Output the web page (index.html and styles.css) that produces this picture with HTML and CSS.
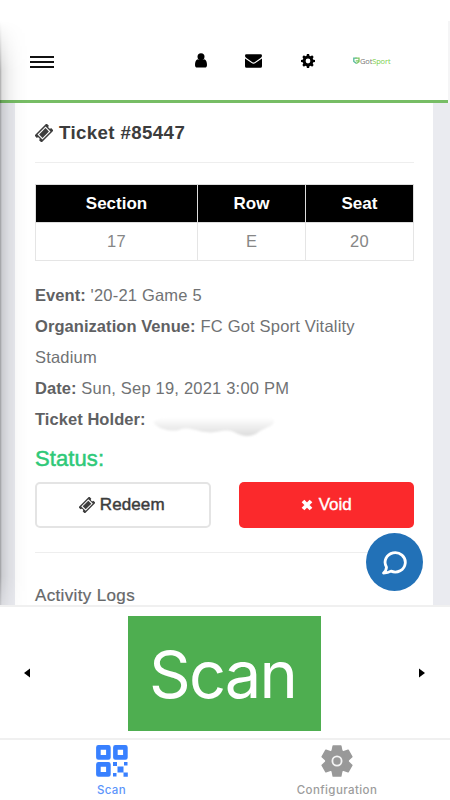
FILE: index.html
```html
<!DOCTYPE html>
<html lang="en">
<head>
<meta charset="utf-8">
<title>Ticket #85447</title>
<link rel="stylesheet" href="styles.css">
</head>
<body>
<svg class="defs" width="0" height="0">
  <symbol id="ticket" viewBox="0 0 18 18">
    <g transform="rotate(-45 9 9)">
      <path fill="currentColor" fill-rule="evenodd" d="M.5 4h17v3.400a1.600 1.600 0 0 0 0 3.200V14H.5v-3.400a1.600 1.600 0 0 0 0-3.200zM3.300 5.500v7h11.400v-7z"/>
      <path fill="currentColor" d="M4.500 6.600h9v4.800h-9z"/>
    </g>
  </symbol>
</svg>
<div class="app">
  <main class="webview">
    <header class="topbar">
      <div class="menu"><span></span><span></span><span></span></div>
      <nav class="icons">
        <svg class="user" width="12" height="15" viewBox="0 0 12 15"><circle cx="6" cy="3.700" r="3.500"/><path d="M2.700 6.200Q6 8 9.300 6.200C11.200 6.800 12 8.800 12 12c0 1.700-.8 2.600-2.200 2.600H2.200C.8 14.600 0 13.700 0 12c0-3.200.8-5.200 2.700-5.800z"/></svg>
        <svg class="mail" width="17" height="14" viewBox="0 0 17 14"><path d="M1.400.3h14.200Q17 .3 17 1.700 17 3 15.600 4L9.600 8.200Q8.500 9 7.400 8.200L1.400 4Q0 3 0 1.700 0 .3 1.400.3z"/><path d="M0 4.500l6.600 4.600q1.900 1.400 3.800 0L17 4.500v7.700q0 1.500-1.500 1.500h-14Q0 13.700 0 12.200z"/></svg>
        <svg class="cog" width="14" height="14" viewBox="0 0 14 14"><circle cx="7" cy="7" r="3.900" fill="none" stroke="#000" stroke-width="3"/><path d="M5.900 0h2.200l.5 3H5.400zM5.900 14h2.200l.5-3H5.400zM0 5.900v2.200l3 .5V5.400zM14 5.900v2.200l-3 .5V5.400zM1.300 2.900l1.600-1.600 2.300 1.700L3 5.200zM11.100 1.300l1.600 1.600L11 5.200 8.800 3zM1.300 11.100l1.600 1.600L5.200 11 3 8.800zM11.100 12.700l1.600-1.600L11 8.800 8.800 11z"/></svg>
      </nav>
      <div class="logo"><svg width="7" height="8" viewBox="0 0 7 8" fill="none" stroke-width="1.300"><path stroke="#54b99a" d="M3.500 6.500L.8 4.500V1.200h2.800"/><path stroke="#80c863" d="M2.500 1.200H6v3.500L3.400 6.500M2.700 3.800H6"/></svg><span>Got<b>Sport</b></span></div>
    </header>
    <section class="card">
      <h1><svg class="ticket" width="18" height="18"><use href="#ticket"/></svg>Ticket #85447</h1>
      <table>
        <thead><tr><th class="section">Section</th><th class="row">Row</th><th>Seat</th></tr></thead>
        <tbody><tr><td>17</td><td>E</td><td>20</td></tr></tbody>
      </table>
      <div class="details">
        <p><b>Event:</b> '20-21 Game 5</p>
        <p><b>Organization Venue:</b> FC Got Sport Vitality<br>Stadium</p>
        <p><b>Date:</b> Sun, Sep 19, 2021 3:00 PM</p>
        <p class="holder"><b>Ticket Holder:</b><svg width="127" height="32" viewBox="0 0 127 32"><defs><linearGradient id="smudge" x1="0" y1="0" x2="0" y2="1"><stop offset=".3" stop-color="#fff"/><stop offset="1" stop-color="#dcdcdc"/></linearGradient><filter id="soft"><feGaussianBlur stdDeviation="1.300"/></filter></defs><path filter="url(#soft)" fill="url(#smudge)" d="M2 14C7 21 18 24 28 22 37 18 44 23 55 24 66 26 72 20 83 24 93 30 102 29 109 23 115 19 124 18 123 12L112 2 80 6 25 2z"/></svg></p>
      </div>
      <h2>Status:</h2>
      <div class="actions">
        <button class="redeem"><svg class="ticket" width="16" height="16"><use href="#ticket"/></svg>Redeem</button>
        <button class="void"><svg width="12" height="12" viewBox="0 0 12 12"><path d="M2 2l8 8M10 2l-8 8" stroke="#fff" stroke-width="3.800"/></svg>Void</button>
      </div>
      <h3>Activity Logs</h3>
    </section>
    <div class="chat"><svg width="26" height="26" viewBox="0 0 26 26" fill="none" stroke="#fff" stroke-width="2.800" stroke-linejoin="round"><path d="M5.500 18.200A10.100 9.700 0 1 1 10 22.100Q7 24 2.500 24 5.300 21.800 5.500 18.200z"/></svg></div>
  </main>
  <section class="scanner">
    <svg width="6" height="10" viewBox="0 0 6 10"><path d="M6 .5v9L0 5z"/></svg>
    <button class="scan">Scan</button>
    <svg width="6" height="10" viewBox="0 0 6 10"><path d="M0 .5v9L6 5z"/></svg>
  </section>
  <nav class="tabs">
    <div class="tab active">
      <svg width="32" height="32" viewBox="0 0 32 32"><g fill="none" stroke="#3880ff" stroke-width="4.600" stroke-linejoin="round"><path d="M2.400 2.400h10v10h-10zM19.400 2.400h10v10h-10zM2.400 19.400h10v10h-10z"/></g><path fill="#3880ff" d="M17 17h4v4h-4zM28 17h3.500v3.500H28zM21.500 21.500h6v6h-6zM17 28h3.500v3.500H17zM27.500 27.500h4.300v4.300h-4.300z"/></svg>
      <span>Scan</span>
    </div>
    <div class="tab config">
      <svg width="32" height="32" viewBox="0 0 32 32"><g fill="#999" stroke="#999" stroke-width="1.500" stroke-linejoin="round"><circle cx="16" cy="16" r="11"/><path id="tooth" d="M11 7l1.200-6h7.600L21 7z"/><use href="#tooth" transform="rotate(60 16 16)"/><use href="#tooth" transform="rotate(120 16 16)"/><use href="#tooth" transform="rotate(180 16 16)"/><use href="#tooth" transform="rotate(240 16 16)"/><use href="#tooth" transform="rotate(300 16 16)"/></g><circle cx="16" cy="16" r="4.600" fill="#999" stroke="#f4f4f4" stroke-width="1.800"/></svg>
      <span>Configuration</span>
    </div>
  </nav>
</div>
</body>
</html>
```
FILE: styles.css
```css
* { box-sizing: border-box; }
body { margin: 0; background: #fff; font-family: "Liberation Sans", Arial, sans-serif; }
h1, h2, h3, p { margin: 0; }
button { font: inherit; margin: 0; padding: 0; }
svg { display: block; flex: none; }
.defs { position: absolute; }
.app { width: 450px; height: 800px; overflow: hidden; display: flex; flex-direction: column; padding-top: 21px; }

.webview { position: relative; height: 584px; overflow: hidden; background: #eaebf0; flex: none; }
.webview::before { content: ""; position: absolute; z-index: 2; left: 0; top: 0; width: 28px; height: 100%;
  background: linear-gradient(90deg, rgba(0,0,0,.34) 0, rgba(0,0,0,.13) 2px, rgba(0,0,0,.06) 9px, rgba(0,0,0,.02) 17px, transparent 28px);
  -webkit-mask-image: linear-gradient(transparent, #000 50px, #000 555px, rgba(0,0,0,.5)); mask-image: linear-gradient(transparent, #000 50px, #000 555px, rgba(0,0,0,.5)); }
.topbar { height: 82px; margin-right: 2px; padding: 0 0 0 30px; display: flex; align-items: center; background: #fff; border-bottom: 3px solid #77bd65; }
.webview::after { content: ""; position: absolute; right: 0; top: 0; width: 2px; height: 82px; background: #f5f5f6; }
.menu { width: 24px; display: grid; gap: 3px; margin-top: 2px; flex: none; }
.menu span { height: 2px; background: #111; }
.icons { display: flex; align-items: center; margin-left: 141px; flex: none; }
.mail { margin: 1px 0 0 38px; }
.cog { margin-left: 39px; }
.logo { display: flex; align-items: center; margin: 1px 0 0 38px; font: 7.500px/8px "Open Sans", sans-serif; letter-spacing: -.15px; color: #777; flex: none; }
.logo b { color: #7cd04b; font-weight: 400; }

.card { width: 418px; height: 502px; margin-left: 15px; padding: 0 19px 0 20px; background: #fff; color: #707274; }
h1 { height: 60px; display: flex; align-items: center; gap: 6px; border-bottom: 1px solid #eee; color: #3c3c3c; font-size: 18.700px; font-weight: 700; letter-spacing: .38px; padding-top: 1px; }
table { width: 379px; margin: 21px 0 0; border-collapse: collapse; table-layout: fixed; text-align: center; font-size: 16.500px; letter-spacing: .2px; }
th { height: 38px; padding: 0; background: #000; color: #fff; border: 1px solid #ddd; font-size: 17px; letter-spacing: 0; }
td { height: 38px; padding: 0; border: 1px solid #e5e5e5; color: #868686; }
.section { width: 162px; }
.row { width: 108px; }
.details { margin-top: 19px; font-size: 16.500px; line-height: 31px; letter-spacing: .2px; }
.details b { color: #5f6163; letter-spacing: .06px; }
.holder { height: 31px; display: flex; align-items: center; }
.holder svg { margin: 8px 0 0 5px; }
h2 { height: 46px; line-height: 48px; color: #2fc978; font-size: 22px; font-weight: 400; letter-spacing: .1px; -webkit-text-stroke: .5px #2fc978; }
.actions { display: flex; justify-content: space-between; margin-top: 1px; }
.actions button { width: 175.500px; height: 46px; display: flex; align-items: center; justify-content: center; border-radius: 5px; font-size: 17px; }
.actions .redeem { gap: 5px; padding-right: 2px; border: 2px solid #e4e4e4; background: #fff; color: #3c3c3c; -webkit-text-stroke: .45px #3c3c3c; letter-spacing: .1px; }
.void { gap: 6px; border: 0; background: #fb292c; color: #fff; -webkit-text-stroke: .4px #fff; }
h3 { margin-top: 24px; border-top: 1px solid #eee; padding-top: 32px; font-size: 17px; line-height: 22px; font-weight: 400; color: #66686a; letter-spacing: .35px; -webkit-text-stroke: .2px #66686a; }
.chat { position: absolute; z-index: 3; left: 366px; top: 512px; width: 57px; height: 58px; border-radius: 50%; background: #2271b7; display: flex; align-items: center; justify-content: center; padding-right: 2px; }

.scanner { height: 135px; flex: none; display: flex; align-items: center; justify-content: space-between; padding: 1px 25px 0 24px; border-top: 2px solid #f0f0f0; border-bottom: 2px solid #f0f0f0; }
.scan { width: 193px; height: 115px; padding: 3px 4px 0 0; border: 0; background: #4eae50; color: #fff; font: 400 65px/1 Inter, sans-serif; letter-spacing: -1.900px; }
.tabs { height: 60px; display: flex; flex: none; }
.tab { width: 225px; display: flex; flex-direction: column; align-items: center; padding-top: 5px; gap: 6px; color: #9c9c9c; font: 500 11.500px/14px Inter, sans-serif; letter-spacing: .4px; }
.tab.config { padding-right: 1px; }
.active { color: #5c95fb; padding-right: 2px; }
```
